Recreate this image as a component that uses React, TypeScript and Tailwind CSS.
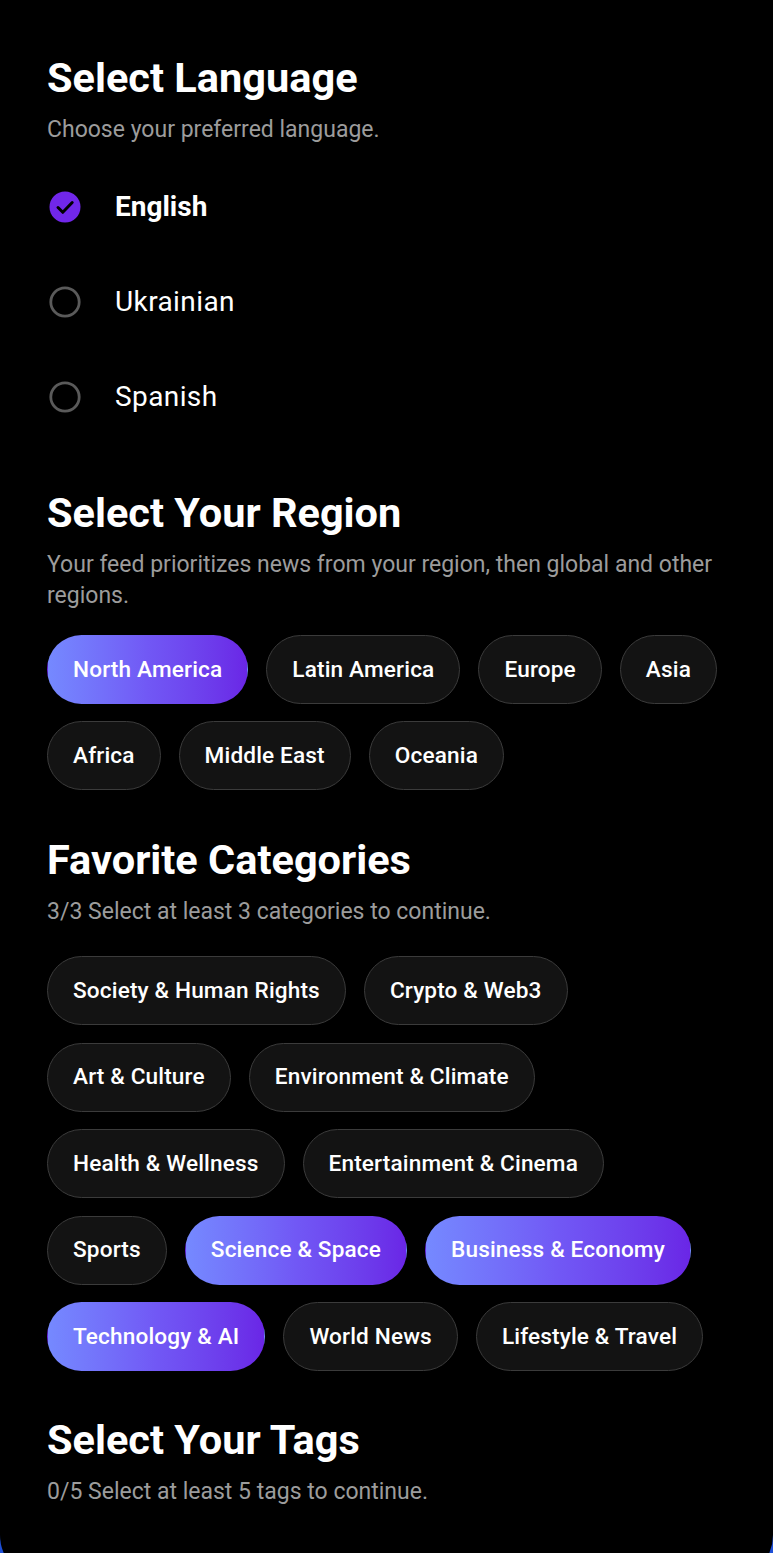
import { useState } from "react";

const languages = ["English", "Ukrainian", "Spanish"];
const regions = ["North America", "Latin America", "Europe", "Asia", "Africa", "Middle East", "Oceania"];
const categories = [
  "Society & Human Rights",
  "Crypto & Web3",
  "Art & Culture",
  "Environment & Climate",
  "Health & Wellness",
  "Entertainment & Cinema",
  "Sports",
  "Science & Space",
  "Business & Economy",
  "Technology & AI",
  "World News",
  "Lifestyle & Travel",
];

function Chip({ label, active, onClick }: { label: string; active: boolean; onClick: () => void }) {
  return (
    <button
      onClick={onClick}
      className={
        active
          ? "h-[69px] px-[25px] rounded-full text-[22.6px] tracking-[0.15px] font-medium text-white bg-gradient-to-r from-[#7589ff] via-[#7158f5] to-[#6a26e6] border-[1.5px] border-transparent"
          : "h-[69px] px-[25px] rounded-full text-[22.6px] tracking-[0.15px] font-medium text-white bg-[#131313] border-[1.5px] border-[#3b3b3b]"
      }
    >
      {label}
    </button>
  );
}

function Heading({ title, subtitle }: { title: string; subtitle: string }) {
  return (
    <>
      <h2 className="text-[41.5px] leading-[50px] font-bold text-white">{title}</h2>
      <p className="mt-[11px] text-[23px] leading-[31px] text-[#9c9c9c]">{subtitle}</p>
    </>
  );
}

export default function App() {
  const [lang, setLang] = useState("English");
  const [region, setRegion] = useState("North America");
  const [cats, setCats] = useState<string[]>(["Science & Space", "Business & Economy", "Technology & AI"]);

  const toggleCat = (c: string) =>
    setCats((prev) => (prev.includes(c) ? prev.filter((x) => x !== c) : [...prev, c]));

  return (
    <div className="h-[1553px] overflow-hidden bg-[#1e4fd6]" style={{ fontFamily: "Roboto, 'Noto Sans', sans-serif" }}>
      <div className="h-[1580px] bg-black rounded-b-[45px] px-[47px] pt-[53px]">
        <section>
          <Heading title="Select Language" subtitle="Choose your preferred language." />
          <div className="mt-[14px] flex flex-col">
            {languages.map((l) => {
              const on = l === lang;
              return (
                <button key={l} onClick={() => setLang(l)} className="h-[95px] flex items-center gap-[33px] text-left">
                  {on ? (
                    <svg width="34" height="34" viewBox="0 0 34 34" className="ml-[1px]">
                      <circle cx="17" cy="17" r="15.5" fill="#7127ea" />
                      <path d="M10 17.5l4.8 4.8 9.4-9.8" fill="none" stroke="#000" strokeWidth="3" strokeLinecap="round" strokeLinejoin="round" />
                    </svg>
                  ) : (
                    <svg width="34" height="34" viewBox="0 0 34 34" className="ml-[1px]">
                      <circle cx="17" cy="17" r="14.2" fill="none" stroke="#5a5a5a" strokeWidth="2.8" />
                    </svg>
                  )}
                  <span className={on ? "text-[28px] font-bold text-white" : "text-[28px] text-white tracking-[0.4px]"}>{l}</span>
                </button>
              );
            })}
          </div>
        </section>

        <section className="mt-[44px]">
          <Heading title="Select Your Region" subtitle="Your feed prioritizes news from your region, then global and other regions." />
          <div className="mt-[24px] flex flex-wrap gap-x-[18px] gap-y-[17px]">
            {regions.map((r) => (
              <Chip key={r} label={r} active={r === region} onClick={() => setRegion(r)} />
            ))}
          </div>
        </section>

        <section className="mt-[45px]">
          <Heading title="Favorite Categories" subtitle={`${cats.length}/3 Select at least 3 categories to continue.`} />
          <div className="mt-[29px] flex flex-wrap gap-x-[18px] gap-y-[17.5px]">
            {categories.map((c) => (
              <Chip key={c} label={c} active={cats.includes(c)} onClick={() => toggleCat(c)} />
            ))}
          </div>
        </section>

        <section className="mt-[44px]">
          <Heading title="Select Your Tags" subtitle="0/5 Select at least 5 tags to continue." />
        </section>
      </div>
    </div>
  );
}
